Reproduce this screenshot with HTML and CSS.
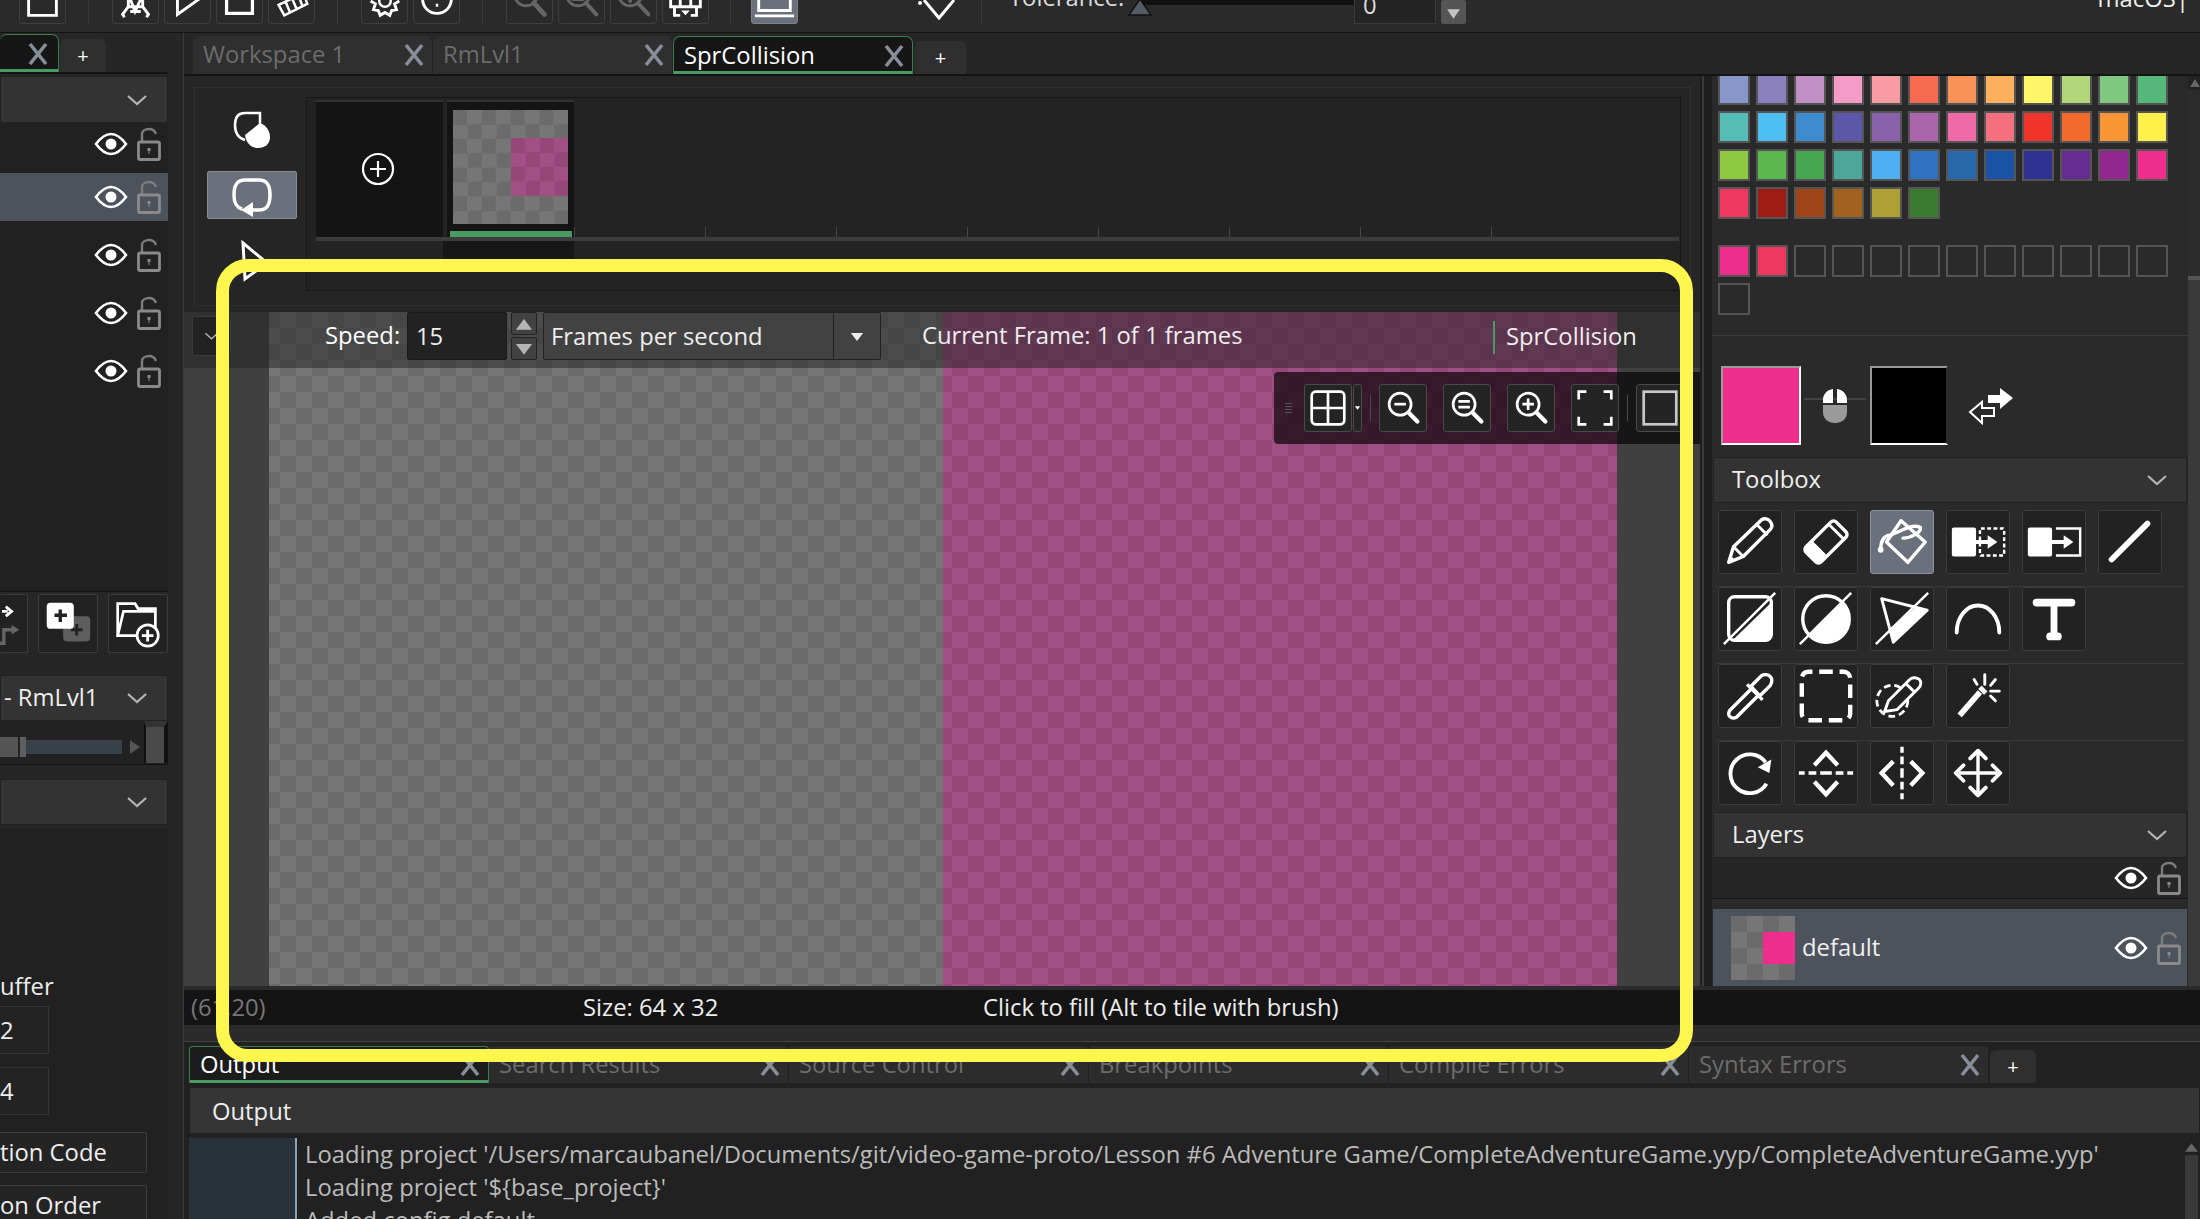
FILE: index.html
```html
<!DOCTYPE html>
<html lang="en">

<head>
    <meta charset="UTF-8">
    <title>SprCollision</title>
    <link rel="stylesheet" href="styles.css">
</head>

<body>
    <svg class="defs" width="0" height="0">
        <symbol id="eye" viewBox="0 0 34 24">
            <path d="M2 12C8 4 13 2 17 2s9 2 15 10c-6 8-11 10-15 10S8 20 2 12z" fill="none" stroke="#fff" stroke-width="2.6" />
            <circle cx="17" cy="12" r="5.5" fill="#fff" />
        </symbol>
        <symbol id="lock" viewBox="0 0 24 34">
            <path d="M5 15V7c0-3 3-5 7-5s6 2 7 5" fill="none" stroke="#7c7c7c" stroke-width="2.4" />
            <rect x="1.5" y="15" width="21" height="17.5" rx="1.5" fill="none" stroke="#8a8a8a" stroke-width="2.8" />
            <path d="M10.5 21h3v3h-1v3h-1v-3h-1z" fill="#8a8a8a" />
        </symbol>
        <symbol id="chev" viewBox="0 0 22 14">
            <path d="M2 3l9 8 9-8" fill="none" stroke="#b4b4b4" stroke-width="2.2" />
        </symbol>
        <symbol id="close" viewBox="0 0 22 24">
            <path d="M3 2l16 20M19 2L3 22" fill="none" stroke="#868e99" stroke-width="3.6" />
        </symbol>
        <symbol id="zoom" viewBox="0 0 48 48">
            <circle cx="21" cy="20" r="11.5" fill="none" stroke="#fff" stroke-width="2.8" />
            <path d="M30 29l9 9" stroke="#fff" stroke-width="4.5" stroke-linecap="round" />
        </symbol>
    </svg>

    <header class="topbar">
        <div class="topgroup">
            <span class="tb"><svg viewBox="0 0 47 47"><path d="M9 39V9h29v30zM9 21h29" fill="none" stroke="#fff" stroke-width="3" /></svg></span>
        </div>
        <i class="topsep"></i>
        <div class="topgroup">
            <span class="tb"><svg viewBox="0 0 47 47"><path d="M16 22v8l-6 8 2 3M31 22v8l6 8-2 3M15 30h17M18 35h11M18 22l5 13 6-13" fill="none" stroke="#fff" stroke-width="3" /></svg></span>
            <span class="tb"><svg viewBox="0 0 47 47"><path d="M13 38V4l24 17z" fill="none" stroke="#fff" stroke-width="3" /></svg></span>
            <span class="tb"><svg viewBox="0 0 47 47"><path d="M10 4h27v33H10z" fill="none" stroke="#fff" stroke-width="3.4" /></svg></span>
            <span class="tb"><svg viewBox="0 0 47 47"><path d="M10 28l26-12 4 11-24 12zM10 28l6 11M17 24l5 12M24 21l5 12M31 18l4 12" fill="none" stroke="#fff" stroke-width="2.6" /></svg></span>
        </div>
        <i class="topsep"></i>
        <div class="topgroup">
            <span class="tb"><svg viewBox="0 0 47 47"><path d="M9 24l5 3-2 6 5 1 2 5 5-3 5 3 2-5 5-1-2-6 5-3" fill="none" stroke="#fff" stroke-width="3" /><circle cx="24" cy="24" r="6" fill="none" stroke="#fff" stroke-width="2.6" /></svg></span>
            <span class="tb"><svg viewBox="0 0 47 47"><circle cx="24" cy="22" r="15" fill="none" stroke="#fff" stroke-width="3" /><path d="M24 27v3M24 22c3-2 2-6-1-6" fill="none" stroke="#fff" stroke-width="2.6" /></svg></span>
        </div>
        <i class="topsep"></i>
        <div class="topgroup">
            <span class="tb"><svg viewBox="0 0 47 47"><circle cx="20" cy="17" r="12" fill="none" stroke="#666" stroke-width="3" /><path d="M28 26l11 12" stroke="#666" stroke-width="5" stroke-linecap="round" /></svg></span>
            <span class="tb"><svg viewBox="0 0 47 47"><circle cx="20" cy="17" r="12" fill="none" stroke="#666" stroke-width="3" /><path d="M28 26l11 12M15 22h10" stroke="#666" stroke-width="4" stroke-linecap="round" /></svg></span>
            <span class="tb"><svg viewBox="0 0 47 47"><circle cx="20" cy="17" r="12" fill="none" stroke="#666" stroke-width="3" /><path d="M28 26l11 12M20 16v8" stroke="#666" stroke-width="4" stroke-linecap="round" /></svg></span>
            <span class="tb"><svg viewBox="0 0 47 47"><path d="M8 22v8h31v-8M12 30v9h6M35 30v9h-6M18 22v8M29 22v8" fill="none" stroke="#fff" stroke-width="3" /><path d="M19 34h9l-4.500 5z" fill="#fff" /></svg></span>
        </div>
        <i class="topsep topsep-last"></i>
        <span class="tb tb-on"><svg viewBox="0 0 47 47"><path d="M7 22v12h33V22" fill="none" stroke="#fff" stroke-width="3" /><path d="M3 38h41v3H3z" fill="#fff" /></svg></span>
        <div class="tolerance">
            <svg class="diamond" viewBox="0 0 46 20"><path d="M8 0l15 18L38 0" fill="none" stroke="#fff" stroke-width="3" /><circle cx="4" cy="3" r="2" fill="#fff" /></svg>
            <i class="topsep topsep-tol"></i>
            <span class="tol-label">Tolerance:</span>
            <div class="tol-slider">
                <svg class="tol-thumb" viewBox="0 0 24 18"><path d="M12 1L23 17H1z" fill="#545a66" stroke="#111" stroke-width="1.500" /></svg>
            </div>
            <span class="tol-input">0</span>
            <span class="tol-spin"><svg viewBox="0 0 14 12"><path d="M1 2h12L7 11z" fill="#c4c4c4" /></svg></span>
        </div>
        <span class="macos">macOS |</span>
    </header>

    <div class="app">
        <aside class="left">
            <div class="tabstrip tabstrip-left">
                <div class="tab tab-on tab-stub"><svg class="xicon"><use href="#close" /></svg></div>
                <div class="tab-add">+</div>
            </div>
            <div class="panelhead"><svg class="chev"><use href="#chev" /></svg></div>
            <div class="rows">
                <div class="row row-first"><svg class="eye"><use href="#eye" /></svg><svg class="lock"><use href="#lock" /></svg></div>
                <div class="row row-on"><svg class="eye"><use href="#eye" /></svg><svg class="lock"><use href="#lock" /></svg></div>
                <div class="row"><svg class="eye"><use href="#eye" /></svg><svg class="lock"><use href="#lock" /></svg></div>
                <div class="row"><svg class="eye"><use href="#eye" /></svg><svg class="lock"><use href="#lock" /></svg></div>
                <div class="row"><svg class="eye"><use href="#eye" /></svg><svg class="lock"><use href="#lock" /></svg></div>
            </div>
            <div class="roombtns">
                <span class="rb rb-cut"><svg viewBox="0 0 28 58"><path d="M2 17h6M6 12l6 5-6 5" fill="none" stroke="#fff" stroke-width="3" /><path d="M0 50h4V36h10" fill="none" stroke="#666" stroke-width="3.500" /><path d="M12 31l8 5-8 5z" fill="#666" /></svg></span>
                <span class="rb"><svg viewBox="0 0 60 58"><rect x="25" y="22" width="28" height="26" rx="4" fill="#5e5e5e" /><path d="M39 30v12M33 36h12" stroke="#222" stroke-width="3" /><rect x="8" y="8" width="28" height="27" rx="4" fill="#fff" /><path d="M22 15v13M16 21h13" stroke="#222" stroke-width="3.500" /></svg></span>
                <span class="rb"><svg viewBox="0 0 60 58"><path d="M9 42V9h18l3 5h18v27M49 17H15L9 42h28" fill="none" stroke="#fff" stroke-width="2.800" /><circle cx="40" cy="42" r="11" fill="#222" stroke="#fff" stroke-width="2.800" /><path d="M40 36v12M34 42h12" stroke="#fff" stroke-width="3" /></svg></span>
            </div>
            <div class="panelhead panelhead-room"><span class="headtext">- RmLvl1</span><svg class="chev"><use href="#chev" /></svg></div>
            <div class="hscroll">
                <i class="hs-thumb"></i>
                <i class="hs-mark"></i>
                <i class="hs-track"></i>
                <svg class="hs-arrow" viewBox="0 0 10 14"><path d="M0 0l10 7-10 7z" fill="#555" /></svg>
                <i class="hs-grip"></i>
            </div>
            <div class="panelhead panelhead-low"><svg class="chev"><use href="#chev" /></svg></div>
            <div class="props">
                <span class="prop-label">uffer</span>
                <span class="prop-input">2</span>
                <span class="prop-input">4</span>
                <span class="prop-btn">tion Code</span>
                <span class="prop-btn">on Order</span>
            </div>
        </aside>

        <main class="main">
            <div class="tabstrip tabstrip-main">
                <div class="tab">Workspace 1<svg class="xicon"><use href="#close" /></svg></div>
                <div class="tab">RmLvl1<svg class="xicon"><use href="#close" /></svg></div>
                <div class="tab tab-on">SprCollision<svg class="xicon"><use href="#close" /></svg></div>
                <div class="tab-add">+</div>
            </div>

            <div class="workrow">
                <section class="editor">
                    <div class="seq">
                        <div class="seq-btns">
                            <svg class="seq-icon" viewBox="0 0 48 48"><path d="M32 19V7H17C10 7 7 12 7 19s3 13 10 15" fill="none" stroke="#fff" stroke-width="2.500" /><path d="M32 17c6 2 10 8 10 14 0 7-5 11-12 11-7 0-12-5-13-13z" fill="#fff" /></svg>
                            <span class="seq-loop"><svg class="seq-icon" viewBox="0 0 48 48"><path d="M14 38C8 36 6 32 6 24c0-10 3-15 11-15h14c8 0 11 5 11 15s-3 15-11 15h-7" fill="none" stroke="#fff" stroke-width="3.500" /><path d="M25 31v15l-12-7z" fill="#fff" /></svg></span>
                            <svg class="seq-icon seq-play" viewBox="0 0 48 48"><path d="M15 5l24 20-22 16z" fill="none" stroke="#fff" stroke-width="3" /></svg>
                        </div>
                        <div class="timeline">
                            <div class="frames">
                                <div class="frame-add"><svg viewBox="0 0 34 34" width="34" height="34"><circle cx="17" cy="17" r="15" fill="none" stroke="#fff" stroke-width="2.200" /><path d="M17 9v16M9 17h16" stroke="#fff" stroke-width="2.200" /></svg></div>
                                <div class="frame-tile">
                                    <div class="thumb"><i class="thumb-pink"></i></div>
                                    <i class="frame-bar"></i>
                                </div>
                                <div class="ticks">
                                    <i></i><i></i><i></i><i></i><i></i><i></i><i></i><i></i>
                                </div>
                            </div>
                            <div class="trackline"></div>
                            <div class="under"><i class="under-dark"></i></div>
                        </div>
                    </div>

                    <div class="canvas">
                        <div class="sprite">
                            <div class="half half-empty"></div>
                            <div class="half half-pink"></div>
                        </div>
                        <div class="canvashead">
                            <span class="collapse"><svg class="chev-sm" viewBox="0 0 22 14"><use href="#chev" /></svg></span>
                            <span class="speed-label">Speed:</span>
                            <span class="speed-input">15</span>
                            <span class="spin">
                                <span class="spin-btn"><svg viewBox="0 0 20 14"><path d="M10 1l9 12H1z" fill="#b5b5b5" /></svg></span>
                                <span class="spin-btn"><svg viewBox="0 0 20 14"><path d="M1 1h18l-9 12z" fill="#b5b5b5" /></svg></span>
                            </span>
                            <span class="fps">Frames per second<span class="fps-arrow"><svg viewBox="0 0 16 12" width="14" height="11"><path d="M1 2h14L8 11z" fill="#eee" /></svg></span></span>
                            <span class="curframe">Current Frame: 1 of 1 frames</span>
                            <span class="sprname">SprCollision</span>
                        </div>
                        <div class="floatbar">
                            <i class="grip"></i>
                            <span class="fb"><svg viewBox="0 0 48 48"><rect x="7" y="7" width="34" height="34" rx="4" fill="none" stroke="#fff" stroke-width="2.800" /><path d="M24 7v34M7 24h34" stroke="#fff" stroke-width="2.800" /></svg></span>
                            <span class="fb-drop"><svg viewBox="0 0 8 6" width="8" height="6"><path d="M1 1h6L4 5z" fill="#fff" /></svg></span>
                            <i class="fb-sep"></i>
                            <span class="fb"><svg viewBox="0 0 48 48"><use href="#zoom" /><path d="M15 20h12" stroke="#fff" stroke-width="2.800" /></svg></span>
                            <span class="fb"><svg viewBox="0 0 48 48"><use href="#zoom" /><path d="M15 17h12M15 23h12" stroke="#fff" stroke-width="2.800" /></svg></span>
                            <span class="fb"><svg viewBox="0 0 48 48"><use href="#zoom" /><path d="M15 20h12M21 14v12" stroke="#fff" stroke-width="2.800" /></svg></span>
                            <span class="fb"><svg viewBox="0 0 48 48"><path d="M7 15V7h8M33 7h8v8M41 33v8h-8M15 41H7v-8" fill="none" stroke="#fff" stroke-width="2.800" /></svg></span>
                            <i class="fb-sep"></i>
                            <span class="fb"><svg viewBox="0 0 48 48"><rect x="7" y="7" width="34" height="34" fill="none" stroke="#c8c8c8" stroke-width="2.800" /></svg></span>
                        </div>
                    </div>
                </section>

                <aside class="right">
                    <div class="swatches swatches-main">
                        <i style="background:#8797c9"></i><i style="background:#8a80bd"></i><i style="background:#c08fc3"></i><i style="background:#f59bc7"></i><i style="background:#f99ba3"></i><i style="background:#f66b50"></i><i style="background:#f99257"></i><i style="background:#feb15c"></i><i style="background:#fff568"></i><i style="background:#b1d67a"></i><i style="background:#7fc87f"></i><i style="background:#55b87a"></i>
                        <i style="background:#55bdb5"></i><i style="background:#4ebff2"></i><i style="background:#3f8bcf"></i><i style="background:#5c57a8"></i><i style="background:#8a62ab"></i><i style="background:#aa65ab"></i><i style="background:#f06aa8"></i><i style="background:#f4707f"></i><i style="background:#f1342a"></i><i style="background:#f36a2a"></i><i style="background:#fb9637"></i><i style="background:#fff04a"></i>
                        <i style="background:#8fc941"></i><i style="background:#59b74d"></i><i style="background:#47a650"></i><i style="background:#4da79a"></i><i style="background:#4eb0f2"></i><i style="background:#2f73c0"></i><i style="background:#2869ac"></i><i style="background:#1a52a4"></i><i style="background:#2e3192"></i><i style="background:#652d91"></i><i style="background:#92278f"></i><i style="background:#ee2d8c"></i>
                        <i style="background:#f0375f"></i><i style="background:#9e1c14"></i><i style="background:#a04518"></i><i style="background:#a2621f"></i><i style="background:#aea035"></i><i style="background:#3a7b30"></i>
                    </div>
                    <div class="swatches swatches-custom">
                        <i style="background:#ee2d8c"></i><i style="background:#f0375f"></i><i></i><i></i><i></i><i></i><i></i><i></i><i></i><i></i><i></i><i></i>
                        <i></i>
                    </div>
                    <div class="chips">
                        <i class="chip chip-pink"></i>
                        <svg class="mouse" viewBox="0 0 62 34"><path d="M0 10h62" stroke="#4c4c4c" stroke-width="1.500" /><path d="M19 16h24v7c0 7-5 11-12 11s-12-4-12-11z" fill="#9a9a9a" /><path d="M19 14v-3C19 5 23 1 29 0v14zM43 14v-3C43 5 39 1 33 0v14z" fill="#fff" /></svg>
                        <i class="chip chip-black"></i>
                        <svg class="swap" viewBox="0 0 46 38"><path d="M20 8h12V1l13 10-13 11v-6H20z" fill="#fff" /><path d="M26 21H14v-6L2 25l12 11v-7h12z" fill="#2a2a2a" stroke="#fff" stroke-width="2" /></svg>
                    </div>

                    <div class="panelhead panelhead-right"><span class="headtext">Toolbox</span><svg class="chev"><use href="#chev" /></svg></div>
                    <div class="tools">
                        <div class="toolrow">
                            <span class="tool"><svg viewBox="0 0 64 64"><path d="M10 53l5-16 29-28c3-2 7-1 9 2s2 6 0 8L25 47z" fill="none" stroke="#fff" stroke-width="3.500" stroke-linejoin="round" /><path d="M39 14l11 11M15 37l10 10" stroke="#fff" stroke-width="3" /><path d="M10 53l2-7 5 5z" fill="#fff" /></svg></span>
                            <span class="tool"><svg viewBox="0 0 64 64"><g transform="rotate(45 32 32)"><rect x="21" y="10" width="22" height="44" rx="4" fill="none" stroke="#fff" stroke-width="3.500" /><path d="M21 41h22v9a4 4 0 0 1-4 4H25a4 4 0 0 1-4-4z" fill="#fff" /><path d="M21 17h22" stroke="#fff" stroke-width="3" /></g></svg></span>
                            <span class="tool tool-on"><svg viewBox="0 0 64 64"><path d="M31 10l25 22-18 21-22-21z" fill="none" stroke="#fff" stroke-width="3.500" stroke-linejoin="round" /><path d="M10 40c0-8 3-14 9-15 10-2 22-13 32-8 1 5-10 11-18 11" fill="none" stroke="#fff" stroke-width="3.500" stroke-linecap="round" /><circle cx="10" cy="40" r="3" fill="#fff" /></svg></span>
                            <span class="tool"><svg viewBox="0 0 64 64"><rect x="5" y="17" width="25" height="30" rx="2" fill="#fff" /><rect x="34" y="18" width="25" height="28" rx="1" fill="none" stroke="#fff" stroke-width="2.500" stroke-dasharray="4 2.500" /><path d="M27 30h15v-5l10 7-10 7v-5H27z" fill="#fff" /></svg></span>
                            <span class="tool"><svg viewBox="0 0 64 64"><rect x="5" y="17" width="25" height="30" rx="2" fill="#fff" /><path d="M34 18h25v28H34" fill="none" stroke="#fff" stroke-width="2.500" /><path d="M27 30h15v-5l10 7-10 7v-5H27z" fill="#fff" /></svg></span>
                            <span class="tool"><svg viewBox="0 0 64 64"><path d="M13 50l37-37" stroke="#fff" stroke-width="6" stroke-linecap="round" /></svg></span>
                        </div>
                        <div class="toolrow">
                            <span class="tool"><svg viewBox="0 0 64 64"><rect x="10" y="9" width="44" height="45" rx="6" fill="none" stroke="#fff" stroke-width="3.500" /><path d="M54 15v33a6 6 0 0 1-6 6H14z" fill="#fff" /><path d="M5 58L58 5" stroke="#fff" stroke-width="2.500" /></svg></span>
                            <span class="tool"><svg viewBox="0 0 64 64"><circle cx="32" cy="32" r="24" fill="none" stroke="#fff" stroke-width="3.500" /><path d="M49 15a24 24 0 1 1-34 34z" fill="#fff" /><path d="M5 58L58 5" stroke="#fff" stroke-width="2.500" /></svg></span>
                            <span class="tool"><svg viewBox="0 0 64 64"><path d="M11 11l47 12-35 33z" fill="none" stroke="#fff" stroke-width="3" stroke-linejoin="round" /><path d="M46 20l12 3-35 33-4-14z" fill="#fff" /><path d="M5 58L59 5" stroke="#fff" stroke-width="2.500" /></svg></span>
                            <span class="tool"><svg viewBox="0 0 64 64"><path d="M10 46c0-16 10-28 22-28s22 12 22 28" fill="none" stroke="#fff" stroke-width="4" stroke-linecap="round" /></svg></span>
                            <span class="tool"><svg viewBox="0 0 64 64"><line x1="14" y1="15" x2="50" y2="15" stroke="#fff" stroke-width="8" stroke-linecap="round" /><line x1="32" y1="15" x2="32" y2="50" stroke="#fff" stroke-width="7" /><line x1="28" y1="50" x2="36" y2="50" stroke="#fff" stroke-width="8" stroke-linecap="round" /></svg></span>
                        </div>
                        <div class="toolrow">
                            <span class="tool"><svg viewBox="0 0 64 64"><path d="M11 53c-2-2-1-4 0-6l23-23 7 7-23 23c-2 1-5 1-7-1z" fill="none" stroke="#fff" stroke-width="3.500" /><path d="M29 20l16 16M33 22l11-11c3-2 7-1 9 1s2 6 0 9L42 32z" fill="none" stroke="#fff" stroke-width="3.500" /></svg></span>
                            <span class="tool"><svg viewBox="0 0 64 64"><rect x="7" y="7" width="50" height="50" rx="7" fill="none" stroke="#fff" stroke-width="4.500" stroke-dasharray="14 7" stroke-dashoffset="-11" /></svg></span>
                            <span class="tool"><svg viewBox="0 0 64 64"><circle cx="22" cy="37" r="16" fill="none" stroke="#fff" stroke-width="2.800" stroke-dasharray="7 4" /><path d="M14 48l4-11 22-22c3-3 8-2 10 0s2 6-1 9L27 46z" fill="#222" stroke="#fff" stroke-width="3" stroke-linejoin="round" /><path d="M36 19l9 9" stroke="#fff" stroke-width="3" /></svg></span>
                            <span class="tool"><svg viewBox="0 0 64 64"><path d="M13 52l21-24" stroke="#fff" stroke-width="6" /><path d="M34 23l6 6" stroke="#fff" stroke-width="5" /><path d="M39 10v10M50 15l-5 6M54 27H45M50 37l-5-5M28 15l3 5" stroke="#fff" stroke-width="3" stroke-linecap="round" /></svg></span>
                        </div>
                        <div class="toolrow toolrow-last">
                            <span class="tool"><svg viewBox="0 0 64 64"><path d="M48 21a20 20 0 1 0 1 22" fill="none" stroke="#fff" stroke-width="4" /><path d="M54 18l-2 14-12-6z" fill="#fff" /></svg></span>
                            <span class="tool"><svg viewBox="0 0 64 64"><path d="M4 32h6M14 32h8M26 32h12M42 32h8M54 32h6" stroke="#fff" stroke-width="3.500" /><path d="M20 24l12-13 12 13M20 41l12 13 12-13" fill="none" stroke="#fff" stroke-width="4.500" /></svg></span>
                            <span class="tool"><svg viewBox="0 0 64 64"><path d="M32 5v6M32 15v8M32 27v10M32 41v8M32 53v6" stroke="#fff" stroke-width="3.500" /><path d="M23 20L11 32l12 13M41 20l12 12-12 13" fill="none" stroke="#fff" stroke-width="4.500" /></svg></span>
                            <span class="tool"><svg viewBox="0 0 64 64"><path d="M32 12v40M12 32h40" stroke="#fff" stroke-width="3.500" /><path d="M24 17l8-8 8 8M24 47l8 8 8-8M17 24l-8 8 8 8M47 24l8 8-8 8" fill="none" stroke="#fff" stroke-width="4" stroke-linecap="round" stroke-linejoin="round" /></svg></span>
                        </div>
                    </div>

                    <div class="panelhead panelhead-right"><span class="headtext">Layers</span><svg class="chev"><use href="#chev" /></svg></div>
                    <div class="layerstop"><svg class="eye"><use href="#eye" /></svg><svg class="lock"><use href="#lock" /></svg></div>
                    <div class="layer">
                        <div class="layer-thumb"><i></i></div>
                        <span class="layer-name">default</span>
                        <svg class="eye"><use href="#eye" /></svg><svg class="lock"><use href="#lock" /></svg>
                    </div>
                </aside>

                <div class="vscroll">
                    <svg class="vs-up" viewBox="0 0 12 8"><path d="M7 0l5 8H2z" fill="#666" /></svg>
                    <i class="vs-thumb"></i>
                    <i class="vs-rest"></i>
                </div>
            </div>

            <div class="statuswrap">
                <div class="status">
                    <span class="st-pos">(61,20)</span>
                    <span class="st-size">Size: 64 x 32</span>
                    <span class="st-hint">Click to fill (Alt to tile with brush)</span>
                </div>
            </div>

            <div class="output">
                <div class="tabstrip tabstrip-out">
                    <div class="tab tab-on">Output<svg class="xicon"><use href="#close" /></svg></div>
                    <div class="tab">Search Results<svg class="xicon"><use href="#close" /></svg></div>
                    <div class="tab">Source Control<svg class="xicon"><use href="#close" /></svg></div>
                    <div class="tab">Breakpoints<svg class="xicon"><use href="#close" /></svg></div>
                    <div class="tab">Compile Errors<svg class="xicon"><use href="#close" /></svg></div>
                    <div class="tab">Syntax Errors<svg class="xicon"><use href="#close" /></svg></div>
                    <div class="tab-add">+</div>
                </div>
                <div class="outhead">Output</div>
                <div class="outbody">
                    <div class="gutter"></div>
                    <div class="log">
                        <div>Loading project '/Users/marcaubanel/Documents/git/video-game-proto/Lesson #6 Adventure Game/CompleteAdventureGame.yyp/CompleteAdventureGame.yyp'</div>
                        <div>Loading project '${base_project}'</div>
                        <div>Added config default</div>
                    </div>
                    <div class="logscroll"><svg viewBox="0 0 12 8"><path d="M6 0l6 8H0z" fill="#666" /></svg><i></i></div>
                </div>
            </div>
        </main>
    </div>

    <div class="highlight"></div>
</body>

</html>
```
FILE: styles.css
```css
* {
    box-sizing: border-box;
}

html,
body {
    height: 100%;
}

body {
    width: 2200px;
    height: 1219px;
    margin: 0;
    overflow: hidden;
    position: relative;
    background-color: #262626;
    color: #fff;
    font-family: "Open Sans", "Noto Sans", sans-serif;
    font-size: 23.8px;
    line-height: 1;
}

svg {
    display: block;
}

i {
    display: block;
}

.defs {
    position: absolute;
}

/* top toolbar, cut by the top of the picture */
.topbar {
    height: 33px;
    display: flex;
    align-items: flex-end;
    padding: 0 0 8px 19px;
    background-color: #2a2a2a;
    border-bottom: 1px solid #141414;
    overflow: hidden;
    position: relative;
}

.topgroup {
    display: flex;
    gap: 5px;
    flex: none;
}

.tb {
    flex: none;
    width: 47px;
    height: 47px;
    border: 1px solid #3f3f3f;
    border-radius: 3px;
}

.tb-on {
    background-color: #6a717c;
    border-color: #7c828c;
}

.topsep {
    flex: none;
    width: 1px;
    height: 24px;
    background-color: #3a3a3a;
    margin: 0 23px 0 22px;
}

.topsep-last {
    margin: 0 20px 0 21px;
}

.tolerance {
    flex: none;
    display: flex;
    align-items: flex-end;
    margin-left: 118px;
}

.diamond {
    width: 46px;
    height: 20px;
    margin-bottom: 4px;
}

.topsep-tol {
    margin: 0 27px 0 19px;
}

.tol-label {
    width: 131px;
    color: #ddd;
    margin-bottom: 14px;
}

.tol-slider {
    width: 214px;
    height: 16px;
    margin-bottom: 8px;
    position: relative;
    background: linear-gradient(#111 5px, transparent 5px);
}

.tol-thumb {
    position: absolute;
    left: -12px;
    bottom: 0;
    width: 24px;
    height: 18px;
}

.tol-input {
    width: 82px;
    height: 30px;
    padding: 0 0 0 8px;
    color: #ddd;
    background-color: #242424;
    border: 1px solid #3a3a3a;
    border-top: none;
}

.tol-spin {
    width: 25px;
    height: 24px;
    margin-left: 5px;
    padding: 7px 5px;
    background-color: #555;
    border-radius: 2px;
}

.macos {
    position: absolute;
    right: 11px;
    bottom: 21px;
    color: #eee;
    word-spacing: -6px;
}

/* overall columns */
.app {
    display: flex;
    height: 1186px;
}

.left {
    flex: none;
    width: 184px;
    padding-right: 15px;
    background-color: #262626;
    border-right: 1px solid #3a3a3a;
    display: flex;
    flex-direction: column;
    overflow: hidden;
}

.main {
    flex: none;
    width: 2016px;
    display: flex;
    flex-direction: column;
}

/* tabs */
.tabstrip {
    display: flex;
    align-items: flex-end;
    flex: none;
}

.tabstrip-left {
    height: 41px;
    border-bottom: 2px solid #141414;
}

.tabstrip-main {
    height: 43px;
    padding: 3px 0 0 9px;
    border-bottom: 2px solid #141414;
}

.tab {
    flex: none;
    width: 240px;
    height: 38px;
    display: flex;
    align-items: center;
    justify-content: space-between;
    padding: 0 7px 0 10px;
    background-color: #2f2f2f;
    color: #6c6c6c;
    border-radius: 7px 7px 0 0;
    border-right: 1px solid #222;
}

.tab-on {
    background-color: #161616;
    color: #fff;
    border: 1px solid #3e7d52;
    border-bottom: none;
    box-shadow: inset 0 -3px 0 #4a9b62;
}

.tab-stub {
    width: 59px;
    justify-content: flex-end;
    border-left: none;
    padding-right: 9px;
}

.tab-add {
    flex: none;
    width: 46px;
    height: 33px;
    margin-left: 1px;
    display: flex;
    align-items: center;
    justify-content: center;
    background-color: #2f2f2f;
    border-radius: 6px 6px 0 0;
    font-size: 20px;
}

.tabstrip-main .tab-add {
    width: 51px;
    margin-left: 2px;
}

.xicon {
    flex: none;
    width: 22px;
    height: 24px;
}

/* collapsible panel headers */
.panelhead {
    flex: none;
    height: 47px;
    display: flex;
    align-items: center;
    padding: 0 19px 0 18px;
    background-color: #333;
    border: 1px solid #222;
}

.headtext {
    color: #eee;
}

.chev {
    flex: none;
    width: 22px;
    height: 14px;
    margin-left: auto;
}

.left .panelhead {
    margin-top: 2px;
}

.left .panelhead-room {
    margin-top: 22px;
    padding-left: 3px;
    height: 46px;
}

.left .panelhead-low {
    height: 46px;
    margin-top: 14px;
}

/* left column rows */
.rows {
    flex: none;
    height: 469px;
    display: flex;
    flex-direction: column;
    gap: 10px;
    background-color: #212121;
    border-bottom: 1px solid #151515;
}

.row {
    flex: none;
    height: 48px;
    display: flex;
    align-items: center;
    justify-content: flex-end;
    gap: 9px;
    padding-right: 7px;
}

.row-first {
    height: 42px;
    margin-bottom: -2px;
}

.row-on {
    background-color: #4c535d;
}

.eye {
    flex: none;
    width: 34px;
    height: 24px;
}

.lock {
    flex: none;
    width: 24px;
    height: 34px;
}

.roombtns {
    flex: none;
    display: flex;
    gap: 10px;
    margin-top: 2px;
}

.rb {
    flex: none;
    width: 60px;
    height: 59px;
    background-color: #222;
    border: 1px solid #3c3c3c;
    border-radius: 2px;
}

.rb-cut {
    width: 28px;
    border-left: none;
}

.hscroll {
    flex: none;
    height: 44px;
    display: flex;
    align-items: flex-start;
    background-color: #222;
    border-bottom: 1px solid #111;
}

.hs-thumb {
    width: 18px;
    height: 20px;
    margin-top: 16px;
    background-color: #555;
}

.hs-mark {
    width: 6px;
    height: 20px;
    margin: 16px 0 0 2px;
    background-color: #5e5e5e;
}

.hs-track {
    width: 96px;
    height: 14px;
    margin-top: 19px;
    background-color: #38404a;
}

.hs-arrow {
    width: 10px;
    height: 14px;
    margin: 19px 0 0 8px;
}

.hs-grip {
    width: 24px;
    height: 42px;
    margin: 0 0 0 4px;
    background-color: #4a4a4a;
    border-top: 6px solid #333;
    border-left: 2px solid #111;
    border-right: 4px solid #111;
}

.props {
    flex: 1;
    display: flex;
    flex-direction: column;
    background-color: #212121;
    margin-top: 3px;
    padding-top: 147px;
}

.prop-label {
    height: 31px;
    color: #eee;
}

.prop-input {
    width: 49px;
    height: 48px;
    margin-bottom: 13px;
    padding-top: 12px;
    color: #eee;
    background-color: #232323;
    border: 1px solid #333;
    border-left: none;
}

.prop-btn {
    width: 147px;
    height: 41px;
    margin-bottom: 12px;
    padding: 8px 44px 0 0;
    color: #eee;
    text-align: right;
    white-space: nowrap;
    background-color: #242424;
    border: 1px solid #3c3c3c;
    border-left: none;
    border-radius: 0 2px 2px 0;
}

.prop-btn+.prop-btn {
    padding-right: 52px;
}

.prop-input+.prop-btn {
    margin-top: 4px;
}

/* editor column */
.workrow {
    flex: none;
    height: 910px;
    display: flex;
}

.editor {
    flex: none;
    width: 1516px;
    display: flex;
    flex-direction: column;
    background-color: #262626;
}

.seq {
    flex: none;
    height: 219px;
    margin: 11px 9px 6px 10px;
    display: flex;
    padding: 9px 9px 14px 0;
    background-color: #252525;
    border: 1px solid #303030;
    overflow: hidden;
}

.seq-btns {
    flex: none;
    width: 111px;
    padding: 9px 0 0 3px;
    display: flex;
    flex-direction: column;
    align-items: center;
}

.seq-icon {
    flex: none;
    width: 48px;
    height: 48px;
}

.seq-loop {
    flex: none;
    width: 90px;
    height: 48px;
    margin-top: 17px;
    background-color: #6a717c;
    border: 1px solid #858b95;
    border-radius: 2px;
    display: flex;
    align-items: center;
    justify-content: center;
}

.seq-play {
    margin-top: 19px;
}

.timeline {
    flex: 1;
    padding: 2px 0 0 9px;
    background-color: #232323;
    border: 1px solid #171717;
    display: flex;
    flex-direction: column;
}

.frames {
    flex: none;
    height: 137px;
    display: flex;
}

.frame-add {
    flex: none;
    width: 127px;
    padding: 0 3px 2px 0;
    background-color: #141414;
    border-top: 2px solid #333;
    display: flex;
    align-items: center;
    justify-content: center;
    margin-right: 4px;
}

.frame-tile {
    flex: none;
    width: 127px;
    display: flex;
    flex-direction: column;
    align-items: center;
    padding-top: 8px;
    background-color: #141414;
    border-top: 2px solid #333;
}

.thumb {
    flex: none;
    width: 115px;
    height: 114px;
    display: flex;
    justify-content: flex-end;
    align-items: center;
    background: repeating-conic-gradient(#767676 0 25%, #6b6b6b 0 50%) 0 0 / 28.8px 28.8px;
}

.thumb-pink {
    width: 57px;
    height: 58px;
    background: repeating-conic-gradient(#a05085 0 25%, #964779 0 50%) 0 0 / 28.8px 28.8px;
}

.frame-bar {
    flex: none;
    width: 122px;
    height: 6px;
    margin-top: 7px;
    background-color: #4a9b62;
}

.ticks {
    flex: 1;
    display: flex;
    align-items: flex-end;
}

.ticks i {
    flex: none;
    width: 1px;
    height: 10px;
    margin-left: 130px;
    background-color: #444;
}

.ticks i:first-child {
    margin-left: 0;
}

.trackline {
    flex: none;
    height: 4px;
    margin-right: 1px;
    background-color: #3c3c3c;
}

.under {
    flex: 1;
    padding-left: 127px;
    background-color: #232323;
}

.under-dark {
    width: 131px;
    height: 26px;
    background-color: #171717;
}

/* canvas */
.canvas {
    flex: 1;
    min-height: 0;
    position: relative;
    display: flex;
    justify-content: center;
    padding: 0 83px 0 85px;
    background-color: #404040;
    overflow: hidden;
}

.sprite {
    flex: 1;
    display: flex;
}

.half {
    flex: none;
    width: 674px;
}

.half-empty {
    background: repeating-conic-gradient(#767676 0 25%, #6b6b6b 0 50%) -5px 0 / 32px 32px;
}

.half-pink {
    background: repeating-conic-gradient(#a05085 0 25%, #964779 0 50%) -7px 0 / 32px 32px;
}

.canvashead {
    position: absolute;
    inset: 0 0 auto 0;
    height: 56px;
    display: flex;
    align-items: flex-start;
    padding: 0 0 0 8px;
    background-color: rgba(34, 34, 34, 0.5);
}

.collapse {
    flex: none;
    width: 39px;
    height: 40px;
    margin-top: 4px;
    border: 1px solid #3a3a3a;
    background-color: #222;
    display: flex;
    align-items: center;
    justify-content: center;
    border-radius: 2px;
}

.chev-sm {
    width: 15px;
    height: 10px;
}

.speed-label {
    width: 73px;
    margin: 12px 9px 0 94px;
    white-space: nowrap;
}

.speed-input {
    flex: none;
    width: 100px;
    height: 48px;
    padding: 12px 0 0 8px;
    color: #eee;
    background-color: #222;
    border: 1px solid #1a1a1a;
    border-radius: 2px;
}

.spin {
    flex: none;
    display: flex;
    flex-direction: column;
    gap: 2px;
    margin-left: 4px;
}

.spin-btn {
    width: 26px;
    height: 23px;
    padding: 5px 3px;
    background-color: #424242;
    border: 1px solid #222;
    border-radius: 2px;
}

.fps {
    flex: none;
    width: 338px;
    height: 48px;
    margin-left: 6px;
    padding: 12px 0 0 7px;
    position: relative;
    color: #eee;
    background-color: #424242;
    border: 1px solid #222;
    border-radius: 2px;
}

.fps-arrow {
    position: absolute;
    top: 0;
    right: 0;
    bottom: 0;
    width: 47px;
    display: flex;
    align-items: center;
    justify-content: center;
    border-left: 1px solid #222;
}

.curframe {
    margin: 12px 0 0 41px;
    color: #eee;
}

.sprname {
    position: absolute;
    left: 1309px;
    top: 9px;
    padding: 4px 0 5px 11px;
    color: #eee;
    border-left: 2px solid #4a9b62;
}

.floatbar {
    position: absolute;
    top: 60px;
    left: 1090px;
    width: 428px;
    height: 72px;
    display: flex;
    align-items: center;
    padding-left: 30px;
    background-color: rgba(0, 0, 0, 0.65);
    border-radius: 4px;
}

.grip {
    position: absolute;
    left: 11px;
    top: 31px;
    width: 7px;
    height: 11px;
    background: repeating-linear-gradient(#555 0 1px, transparent 1px 3px);
}

.fb {
    flex: none;
    width: 48px;
    height: 48px;
    margin-right: 16px;
    background-color: #242424;
    border: 1px solid #4a4a4a;
    border-radius: 3px;
}

.fb:first-of-type {
    margin-right: 1px;
}

.fb-drop {
    flex: none;
    width: 9px;
    height: 48px;
    background-color: #242424;
    border: 1px solid #4a4a4a;
    border-radius: 3px;
    display: flex;
    align-items: center;
    justify-content: center;
}

.fb-sep {
    flex: none;
    width: 1px;
    height: 26px;
    background-color: #4a4a4a;
    margin: 0 8px;
}

.fb:nth-last-of-type(2) {
    margin-right: 0;
}

/* right column */
.right {
    flex: none;
    width: 488px;
    padding: 1px 0 0 12px;
    background:
        linear-gradient(90deg, #1e1e1e 0 2px, #3a3a3a 2px 4px, #1e1e1e 4px 12px, #2a2a2a 12px);
    display: flex;
    flex-direction: column;
    overflow: hidden;
}

.swatches {
    flex: none;
    display: grid;
    grid-template-columns: repeat(12, 32px);
    gap: 6px;
    padding-left: 6px;
    background-color: #2a2a2a;
}

.swatches i {
    height: 32px;
    border: 2px solid #555;
}

.swatches-main {
    margin-top: -4px;
}

.swatches-custom {
    padding-top: 26px;
    padding-bottom: 20px;
    border-bottom: 1px solid #3a3a3a;
}

.chips {
    flex: none;
    height: 121px;
    display: flex;
    align-items: flex-start;
    padding: 30px 0 0 9px;
    background-color: #2a2a2a;
}

.chip {
    flex: none;
    width: 80px;
    height: 79px;
    border: 2px solid;
    border-color: #999 #2a2a2a #fff #999;
}

.chip-pink {
    background-color: #ee2d8c;
    border-right-color: #fff;
}

.chip-black {
    width: 78px;
    background-color: #000;
}

.mouse {
    flex: none;
    width: 62px;
    height: 34px;
    margin: 23px 4px 0 3px;
}

.swap {
    flex: none;
    width: 46px;
    height: 38px;
    margin: 21px 0 0 20px;
}

.panelhead-right {
    width: 474px;
    margin-left: 1px;
    height: 46px;
    padding-right: 18px;
}

.tools {
    flex: none;
    padding-top: 7px;
    background-color: #2a2a2a;
}

.toolrow {
    height: 77px;
    display: flex;
    gap: 12px;
    margin-left: 4px;
    margin-right: 4px;
    padding: 0 0 0 2px;
    border-bottom: 1px solid #383838;
}

.toolrow-last {
    height: 71px;
    border-bottom: none;
}

.tool {
    flex: none;
    width: 64px;
    height: 64px;
    background-color: #222;
    border: 1px solid #3c3c3c;
    border-radius: 3px;
}

.tool svg {
    width: 62px;
    height: 62px;
}

.tool-on {
    background-color: #6a717c;
    border-color: #8e949d;
}

.layerstop {
    flex: none;
    height: 41px;
    display: flex;
    align-items: center;
    justify-content: flex-end;
    gap: 9px;
    padding-right: 7px;
    background-color: #262626;
    border-bottom: 1px solid #141414;
}

.layer {
    flex: none;
    height: 78px;
    margin: 10px 1px 0 1px;
    display: flex;
    align-items: center;
    gap: 9px;
    padding: 0 6px 0 18px;
    background-color: #4c535d;
}

.layer-thumb {
    flex: none;
    width: 64px;
    height: 64px;
    margin-right: -2px;
    display: flex;
    justify-content: flex-end;
    align-items: center;
    background: repeating-conic-gradient(#767676 0 25%, #6b6b6b 0 50%) 0 0 / 32px 32px;
}

.layer-thumb i {
    width: 32px;
    height: 32px;
    background-color: #ee2d8c;
}

.layer-name {
    flex: 1;
    color: #eee;
}

.vscroll {
    flex: none;
    width: 12px;
    display: flex;
    flex-direction: column;
    background-color: #222;
    padding-top: 3px;
}

.vs-up {
    flex: none;
    width: 12px;
    height: 8px;
}

.vs-thumb {
    height: 190px;
    margin-top: 3px;
    background-color: #2c2c2c;
    border-bottom: 4px solid #555;
}

.vs-rest {
    flex: 1;
    background-color: #3a3a3a;
}

/* status bar */
.statuswrap {
    flex: none;
    height: 56px;
    padding-top: 4px;
    background-color: #2b2b2b;
    border-bottom: 1px solid #444;
}

.status {
    height: 35px;
    display: flex;
    align-items: center;
    background-color: #141414;
    padding-left: 7px;
}

.st-pos {
    flex: none;
    width: 392px;
    color: #777;
}

.st-size {
    flex: none;
    width: 400px;
    color: #eee;
}

.st-hint {
    color: #eee;
}

/* output panel */
.output {
    flex: 1;
    min-height: 0;
    display: flex;
    flex-direction: column;
    background-color: #212121;
}

.tabstrip-out {
    height: 41px;
    padding-left: 5px;
}

.tabstrip-out .tab {
    width: 300px;
    height: 37px;
    background-color: #2c2c2c;
    border-radius: 4px 4px 0 0;
}

.tabstrip-out .tab-on {
    background-color: #1c1c1c;
}

.outhead {
    flex: none;
    height: 47px;
    margin: 4px 0 0 5px;
    padding: 12px 0 0 22px;
    color: #eee;
    background-color: #353535;
    border: 1px solid #222;
}

.outbody {
    flex: 1;
    min-height: 0;
    display: flex;
    margin: 4px 0 0 5px;
    overflow: hidden;
}

.gutter {
    flex: none;
    width: 108px;
    background-color: #29323a;
    border-right: 2px solid #8ea3b8;
}

.log {
    flex: 1;
    padding: 0 0 0 8px;
    color: #bbb;
    line-height: 33px;
    white-space: nowrap;
}

.logscroll {
    flex: none;
    width: 13px;
    margin-right: 2px;
    padding-top: 5px;
    display: flex;
    flex-direction: column;
}

.logscroll svg {
    flex: none;
    width: 13px;
    height: 9px;
}

.logscroll i {
    flex: 1;
    margin-top: 3px;
    background-color: #3a3a3a;
}

/* yellow annotation round the sprite area */
.highlight {
    position: absolute;
    left: 216px;
    top: 259px;
    width: 1477px;
    height: 803px;
    border: 13px solid #fdf64e;
    border-radius: 32px;
    pointer-events: none;
}
```
